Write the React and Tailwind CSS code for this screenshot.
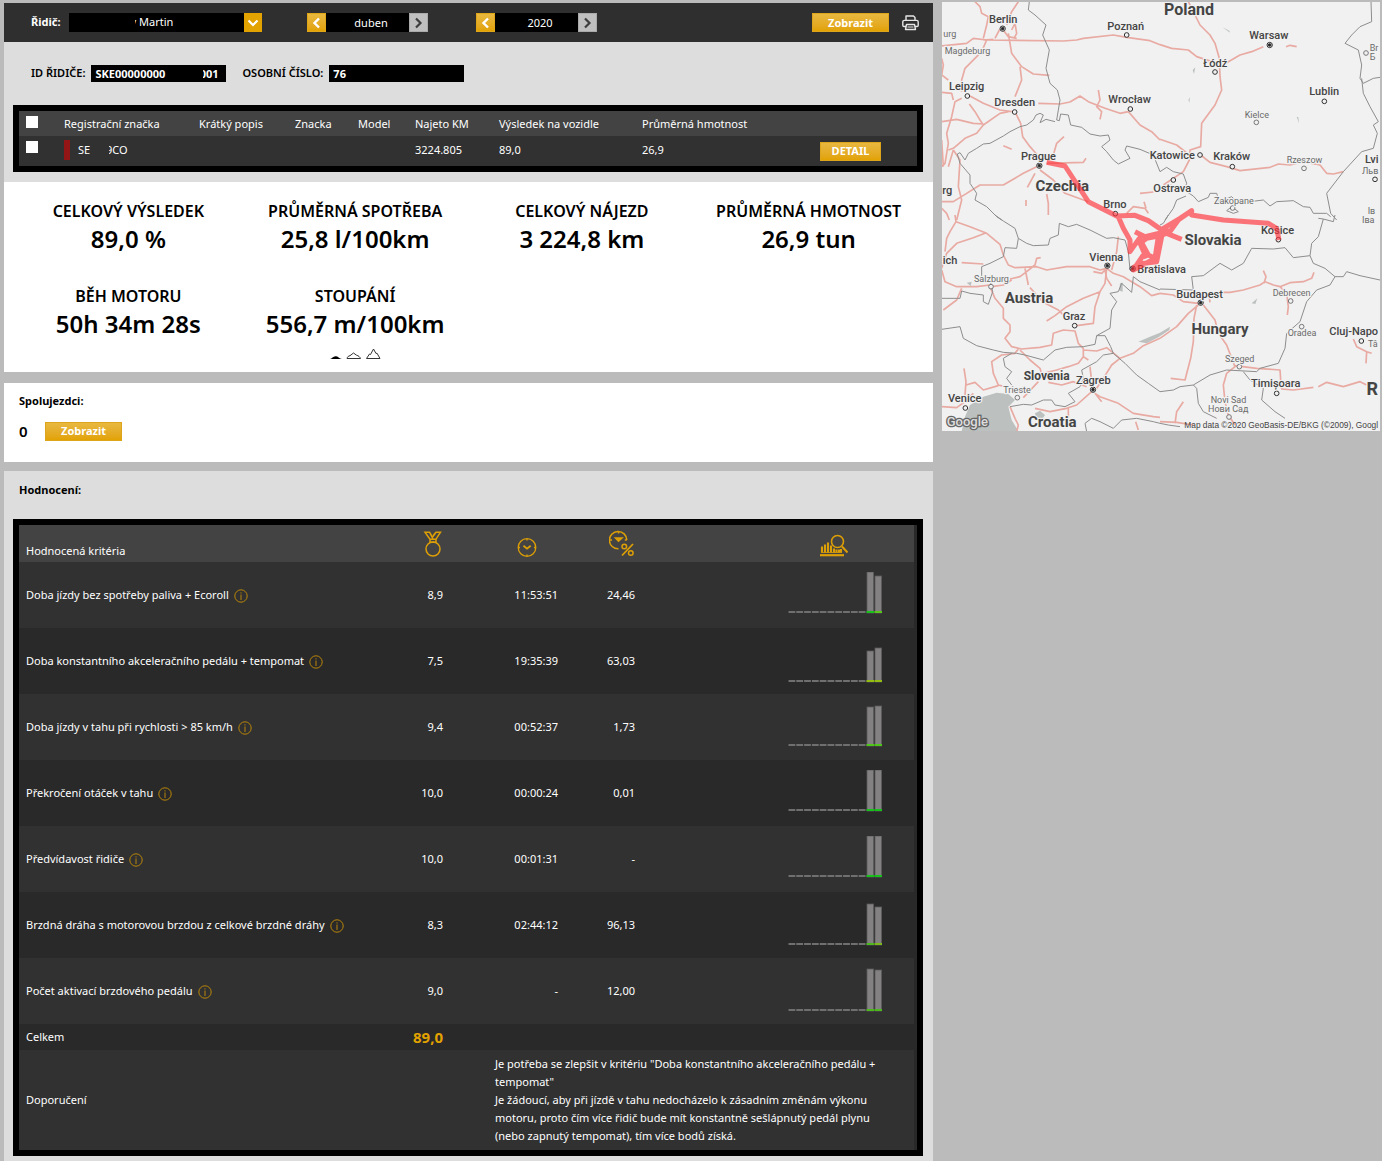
import { useState } from 'react'
import clsx from 'clsx'

const months = ['leden', 'únor', 'březen', 'duben', 'květen', 'červen', 'červenec', 'srpen', 'září', 'říjen', 'listopad', 'prosinec']

const stats = [
  { label: 'CELKOVÝ VÝSLEDEK', value: '89,0 %' },
  { label: 'PRŮMĚRNÁ SPOTŘEBA', value: '25,8 l/100km' },
  { label: 'CELKOVÝ NÁJEZD', value: '3 224,8 km' },
  { label: 'PRŮMĚRNÁ HMOTNOST', value: '26,9 tun' },
  { label: 'BĚH MOTORU', value: '50h 34m 28s' },
  { label: 'STOUPÁNÍ', value: '556,7 m/100km', hills: true }
]

// base = y of the chart baseline, bars = [height, colour of the foot]
const criteria = [
  { name: 'Doba jízdy bez spotřeby paliva + Ecoroll', score: '8,9', time: '11:53:51', pct: '24,46', base: 41, bars: [[41, '#16c21a'], [37, '#58c71a']] },
  { name: 'Doba konstantního akceleračního pedálu + tempomat', score: '7,5', time: '19:35:39', pct: '63,03', base: 44, bars: [[31, '#93bd12'], [34, '#93bd12']] },
  { name: 'Doba jízdy v tahu při rychlosti > 85 km/h', score: '9,4', time: '00:52:37', pct: '1,73', base: 42, bars: [[39, '#4fc51a'], [40, '#4fc51a']] },
  { name: 'Překročení otáček v tahu', score: '10,0', time: '00:00:24', pct: '0,01', base: 41, bars: [[41, '#16c21a'], [41, '#16c21a']] },
  { name: 'Předvídavost řidiče', score: '10,0', time: '00:01:31', pct: '-', base: 41, bars: [[41, '#16c21a'], [41, '#16c21a']] },
  { name: 'Brzdná dráha s motorovou brzdou z celkové brzdné dráhy', score: '8,3', time: '02:44:12', pct: '96,13', base: 43, bars: [[41, '#4cb81c'], [38, '#7ab81c']] },
  { name: 'Počet aktivací brzdového pedálu', score: '9,0', time: '-', pct: '12,00', base: 43, bars: [[42, '#4cb81c'], [41, '#4cb81c']] }
]

const GoldButton = ({ children, className }) => (
  <button
    type="button"
    className={clsx(
      'h-[19px] border border-[#dca51c] bg-linear-to-b from-[#e8b83e] to-[#e2a200] text-[11px] leading-4 font-bold text-white',
      className
    )}
  >
    {children}
  </button>
)

const Stepper = ({ label, value, onPrev, onNext }) => (
  <div className="flex h-[19px]" role="group" aria-label={label}>
    <button type="button" aria-label="Předchozí" onClick={onPrev} className="flex w-[19px] items-center justify-center border border-[#e0a61a] bg-linear-to-b from-[#e8b83e] to-[#e2a200]">
      <svg width="9" height="12" viewBox="0 0 9 12" fill="none" stroke="#fff" strokeWidth="2.4"><path d="M7 1.500 2.500 6 7 10.500" /></svg>
    </button>
    <span className="w-[83px] bg-black pl-2 text-center text-[11px] leading-[19px] text-white">{value}</span>
    <button type="button" aria-label="Další" onClick={onNext} className="flex w-[19px] items-center justify-center border border-[#aaa] bg-[#bfbfbf]">
      <svg width="9" height="12" viewBox="0 0 9 12" fill="none" stroke="#3d3d3d" strokeWidth="2.200"><path d="M2 1.500 6.500 6 2 10.500" /></svg>
    </button>
  </div>
)

const PrinterIcon = () => (
  <svg width="17" height="16" viewBox="0 0 17 16" fill="none" stroke="#e6e6e6" strokeWidth="1.400" strokeLinejoin="round">
    <path d="M4 5V1h7.500L13 2.500V5" />
    <path d="M4 11.500H2A1.200 1.200 0 0 1 .8 10.300V7A1.600 1.600 0 0 1 2.400 5.400h12.200A1.600 1.600 0 0 1 16.200 7v3.300a1.200 1.200 0 0 1-1.200 1.200h-2" />
    <path d="M4.500 9.500h8l1 5h-10z" />
    <path d="M5.500 12h6" strokeWidth="1" />
  </svg>
)

const HillsIcon = () => (
  <svg className="mx-auto mt-2" width="52" height="12" viewBox="0 0 52 12" fill="none" stroke="#333" strokeWidth="1">
    <path d="M1 11c2-.5 3-2.500 5.500-2.800C9 8 10 10.500 13 11z" fill="#000" stroke="none" />
    <path d="M18 10.500c.5-2 1.500-2.500 3-2.800L24.500 5l3 2.200c2 .5 3.500 1.800 4 3.300z" />
    <path d="M37.500 10.500 40.500 6l1 .5L44.500 1 47 5.500l1-.3 3 5.300z" />
  </svg>
)

const MedalIcon = () => (
  <svg className="ml-auto" width="22" height="26" viewBox="0 0 22 26" fill="none" stroke="#dd9f06" strokeWidth="1.500">
    <circle cx="12" cy="18" r="7" />
    <path d="M4 1.200h4.500l3 5 3.500-5h4.500L15 8.200v3H9v-3zM9 8.200h6M8.500 1.200 12 8M15 1.200 12.500 4" />
  </svg>
)

const ClockIcon = () => (
  <svg className="mx-auto" width="20" height="20" viewBox="0 0 20 20" fill="none" stroke="#dd9f06" strokeWidth="1.300">
    <circle cx="10" cy="9.500" r="8.800" />
    <path d="m6.500 7.800 3.500 2.800 3.700-2.800" strokeWidth="1.800" />
    <path d="M10 1v1.600M10 16.500v1.600M1.500 9.500H3M17 9.500h1.500" />
  </svg>
)

const ClockPercentIcon = () => (
  <svg className="ml-auto" width="26" height="27" viewBox="0 0 26 27" fill="none" stroke="#dd9f06" strokeWidth="1.500">
    <path d="M9.500 18.800A8.700 8.700 0 1 1 17.800 10" />
    <path d="m6.500 8 3 3.200L13 8z" fill="#dd9f06" />
    <path d="M9.500 1.500v2M1 10h2M15.800 10h2" />
    <circle cx="15.300" cy="16.500" r="2.300" />
    <circle cx="21.800" cy="23" r="2.300" />
    <path d="M24 14 13 25.500" strokeWidth="1.800" />
  </svg>
)

const AnalysisIcon = () => (
  <svg width="28" height="23" viewBox="0 0 28 23" fill="none" stroke="#dd9f06">
    <circle cx="17.500" cy="7.500" r="6" strokeWidth="1.600" />
    <path d="m22 12.500 5.500 6" strokeWidth="2" />
    <path d="M2 18.500v-6M5 18.500v-8M8 18.500V8.500M11 18.500v-7M14 18.500v-4M16.500 18.500v-3M19 18.500v-3M21 18.500v-3.500" strokeWidth="2.100" />
    <path d="M0 21.200h24" strokeWidth="2.200" />
    <path d="M1 18.500h21" strokeWidth="0.800" />
  </svg>
)

const InfoIcon = () => (
  <svg className="ml-[5px] inline-block align-[-4px]" width="14" height="14" viewBox="0 0 14 14" fill="none" stroke="#b9860a" strokeWidth="1">
    <circle cx="7" cy="7" r="6.200" />
    <path d="M7 5.500v5.500M7 3.300v1.200" />
  </svg>
)

const TrendChart = ({ base, bars }) => (
  <svg className="ml-auto block" width="94" height="46" viewBox="0 0 94 46">
    {Array.from({ length: 10 }, (_, i) => (
      <rect key={i} x={0.5 + i * 7.8} y={base - 2} width="6.800" height="2" fill="#6f6f6f" />
    ))}
    {bars.map(([height, color], i) => (
      <g key={i}>
        <rect x={79 + i * 8} y={base - height} width="6.600" height={height} fill="#838181" stroke="#5c5b5b" strokeWidth="0.800" />
        <rect x={78.5 + i * 8} y={base - 2} width="7.500" height="2" fill={color} />
      </g>
    ))}
  </svg>
)

// Three map units make one pixel; every tile keeps its own origin.
const tiles = [
  {
    shift: 'translate(0 0)',
    roads: [
      'M105 5 120 20 125 40 145 50 140 75 130 115M235 5 215 35 200 75M130 120 160 118M165 115 178 90 188 88 205 110 230 115M215 90 225 70 230 100 222 115M0 138 80 130 100 115 140 120 370 123 410 120 430 115 520 105 560 112 630 122 660 134',
      'M205 100 215 160 245 200 280 222 328 226M240 200 245 240 225 290M140 120 125 155 75 205 65 240 65 275M5 175 10 195 5 225 25 240M5 277 35 280 40 300M65 295 45 305 35 350 20 400 25 430 15 490 5 500',
      'M90 288 130 310 180 330 215 335M205 335 180 340 130 375 110 400 75 415 40 445 25 450M5 365 50 358 100 370 130 372M88 312 105 335 120 360 130 375M295 310 360 312 390 306 420 288 445 305 495 325 540 340 565 335M475 270 480 300 470 320 485 335 480 358',
      'M565 335 600 375 635 395 660 420M225 335 242 370 248 410 270 440 292 465M340 465 350 430 372 410M190 437 215 448M320 490 430 487 438 475M5 605 40 605 80 580 120 555 190 555 250 520 290 500M300 510 340 540 375 580 445 605M285 520 262 562M320 582 325 610 325 645M258 600 258 618M40 450 60 480 55 560 65 600 50 660M5 625 20 640 28 660M40 450 25 500M5 420 10 500M560 640 580 620 615 625 625 640M612 605 618 625M600 580 640 576'
    ],
    borders: [
      'M268 5 265 30 285 45 318 75 308 105 328 150 318 205 330 250 352 270 360 300 350 360 358 362 362 342 385 345 392 375 425 382 450 402 480 408 505 405 510 420 485 440 500 455 520 480 535 492 570 475 555 450 560 438 600 448 640 465 660 515',
      'M345 365 318 358 300 368 310 345 300 340 288 345 280 360 260 375 240 380 210 395 190 408 150 430 130 432 110 445 85 460 75 480 60 458 52 462 60 490 90 525 90 550 110 580 105 600 140 620 170 650 185 660'
    ]
  },
  {
    shift: 'translate(660 0)',
    roads: [
      'M85 5 105 45 120 75 150 105 165 130 178 175 180 230 185 270 165 315 125 370 122 440 90 450 88 480 70 515 10 555M0 134 35 145 85 150 110 170 165 188 200 188 240 165 275 155 310 140M378 140 390 136 410 140M0 418 50 435 88 465M122 465 150 487 200 500 240 512 330 502 355 492 390 495 430 485 480 495 500 520 520 522 550 515M0 570 35 555'
    ],
    borders: [
      'M633 5 635 65 600 80 575 105 555 130 595 150 605 195 600 235 610 250 640 235 660 232M605 235 610 280 630 320 655 365 640 375 652 400 640 445 605 455 550 515 500 580 512 640 530 660',
      'M0 515 20 502 40 515 70 522 80 550 72 570 100 588 115 605 145 592 150 580 170 580 178 605 215 590 225 600 270 605 310 600 330 618 350 605 400 602 430 620 450 622 460 640 500 640 512 650M200 632 215 620 235 635 220 640zM78 588 50 600 40 625 15 660'
    ]
  },
  {
    shift: 'translate(0 645)',
    roads: [
      'M45 0 48 20 90 35 140 55 180 88 190 120 205 150 225 158 290 155 320 165 380 155 450 155 480 165 500 160M135 55 100 68 50 85 20 115 5 160M15 110 20 70 30 50 48 20M5 165 15 200 50 215 110 215 150 210M65 143 130 147M210 192 240 185 260 170 285 150M255 160 265 210M285 150 290 130 302 128M155 215 190 210 215 195',
      'M65 220 50 255 10 285M150 215 165 250 190 280 190 310 210 330 210 350 195 370 215 395 245 402 300 397 335 390 340 355 370 345 405 348 415 385 430 400 430 425 415 445 385 455 350 465 310 475M270 218 290 240 310 262 355 285 375 305 405 312M320 318 345 302 380 275 430 250 480 230 495 205 500 160M480 230 465 275 460 325 410 332M430 405 470 408 500 398 540 430M430 425 445 435',
      'M460 170 485 175 500 160 520 175 550 185 600 215 635 242 660 235M495 165 500 190 515 213M515 165 530 110 535 65M240 405 270 435 300 460 310 495M235 402 225 415 185 420 155 440 160 475 175 510 195 515M72 460 78 500 75 540M78 510 105 502 130 525 175 512M5 575 50 578 75 560 100 535M250 548 295 500',
      'M660 370 610 392 580 415 540 430 515 450 490 490 470 520M450 455 455 500M325 502 365 510 400 500 440 515M465 535 480 545 535 565 580 595 640 605 660 607M455 530 410 570 380 580 330 590 285 580M210 575 225 610 235 630 230 650M385 575 385 610M587 620 595 645M465 535 485 560'
    ],
    borders: [
      'M165 0 190 18 225 40 235 70 260 85 280 92 325 90 330 70 355 60 358 25 385 35 410 28 450 45 500 70 520 68 555 75M555 75 565 110 570 165M235 70 230 100 195 98 190 125 150 145 125 155 125 185 150 195 158 230 145 268 130 260 130 240 90 235 65 228 60 250 5 250',
      'M5 343 60 335 70 370 110 392 160 405 190 412 230 415 255 420 310 435 345 405 380 397 430 395 465 388 470 362 510 340 515 285 530 260 510 235 535 230 545 205 575 232 580 185 600 200 660 225M470 362 495 362 512 395 520 415 555 445 590 480 625 505 660 530',
      'M215 415 190 430 195 455 215 470 200 490 215 510M210 575 250 568 275 570 310 555 335 555 345 570 375 575 405 560 385 535 420 515 430 490 425 465 470 440 490 420 520 415M440 650 435 625 455 610 480 620 520 640 545 615 590 610 640 620 660 625'
    ]
  },
  {
    shift: 'translate(660 645)',
    roads: [
      'M0 235 40 240 70 260 115 265M0 370 50 335 85 295 115 270M110 270 102 310 100 380 92 430 75 495 32 490M130 270 165 315 175 355 200 390 215 430 225 455 200 475 190 510 195 560 205 600 225 630M180 232 210 232 250 225 300 210 315 200 340 210 360 215 390 203 430 200 455 190 462 172M310 167 318 185 312 205M360 215 380 235 385 275 382 300M150 262 148 245M225 452 290 460 360 465 362 495 365 522 400 525 460 517M475 515 500 502 550 515 600 500 620 510M580 372 590 395 620 410 618 445M620 410 635 415M0 620 50 622 100 630M70 560 50 590 45 625'
    ],
    borders: [
      'M0 222 100 225 95 185 130 182 180 145 215 165 250 145 275 100 340 102 375 98 400 128 450 122 460 145 495 160 525 185 510 210 470 225 440 260 420 320 380 355 375 400 355 445 300 460 290 470 200 465 150 480 100 510 60 515 40 525 0 530',
      'M450 122 455 85 475 65 490 12 475 10M490 12 520 20 525 0M525 185 550 185 560 170 600 182 660 195M250 470 270 495 310 520 305 555 345 590 375 610M100 510 110 520 115 565 130 590 170 610M0 625 25 630 60 635M25 0 10 25 0 30'
    ]
  }
]

const route = [
  'M-100 -83 -45 -72 25 35 70 58 110 78 165 76 205 92 260 130 305 148',
  'M115 80 130 115 150 150 150 185 178 145 205 195 225 205 235 140 270 125 295 90 335 62 335 75 430 90 565 100 590 115 597 150',
  'M158 235 175 222 230 215 235 190',
  'M165 125 195 140 270 122M180 160 200 145 250 135M190 195 160 240 225 205M178 155 200 205',
  'M335 62 300 85 250 115 232 205'
]

// text, x, y (baseline start) and the town's marker
const places = [
  { t: 'Berlin', x: 147, y: 69, c: [188, 86], capital: true },
  { t: 'Poznań', x: 502, y: 90, c: [560, 105] },
  { t: 'urg', x: 10, y: 112, minor: true },
  { t: 'Magdeburg', x: 14, y: 162, minor: true },
  { t: 'Leipzig', x: 27, y: 270, c: [82, 288] },
  { t: 'Dresden', x: 163, y: 319, c: [224, 336] },
  { t: 'Wrocław', x: 505, y: 309, c: [571, 327] },
  { t: 'Prague', x: 243, y: 480, c: [298, 497], capital: true },
  { t: 'Brno', x: 490, y: 625, c: [526, 641] },
  { t: 'rg', x: 7, y: 582 },
  { t: 'Warsaw', x: 928, y: 117, c: [989, 135], capital: true },
  { t: 'Łódź', x: 790, y: 201, c: [825, 216] },
  { t: 'Lublin', x: 1108, y: 286, c: [1153, 304] },
  { t: 'Kielce', x: 914, y: 353, c: [949, 367], minor: true },
  { t: 'Katowice', x: 629, y: 478, c: [780, 465] },
  { t: 'Kraków', x: 820, y: 481, c: [877, 500] },
  { t: 'Rzeszow', x: 1040, y: 490, c: [1092, 505], minor: true },
  { t: 'Ostrava', x: 640, y: 577, c: [700, 540] },
  { t: 'Zakopane', x: 822, y: 613, c: [878, 624], minor: true },
  { t: 'Br', x: 1289, y: 154, c: [1278, 159], minor: true },
  { t: 'Б', x: 1289, y: 180, minor: true },
  { t: 'Lvi', x: 1275, y: 489, c: [1305, 538] },
  { t: 'Льв', x: 1266, y: 521, minor: true },
  { t: 'Ів', x: 1283, y: 642, minor: true },
  { t: 'Іва', x: 1266, y: 669, minor: true },
  { t: 'ich', x: 8, y: 793 },
  { t: 'Vienna', x: 448, y: 782, c: [502, 797], capital: true },
  { t: 'Bratislava', x: 592, y: 818, c: [578, 806], capital: true },
  { t: 'Salzburg', x: 102, y: 846, c: [153, 860], minor: true },
  { t: 'Graz', x: 368, y: 960, c: [404, 977] },
  { t: 'Zagreb', x: 408, y: 1152, c: [459, 1169], capital: true },
  { t: 'Trieste', x: 190, y: 1179, c: [232, 1193], minor: true },
  { t: 'Venice', x: 24, y: 1207, c: [76, 1224] },
  { t: 'Košice', x: 963, y: 701, c: [1015, 719] },
  { t: 'Budapest', x: 709, y: 893, c: [782, 908], capital: true },
  { t: 'Debrecen', x: 998, y: 889, c: [1052, 903], minor: true },
  { t: 'Oradea', x: 1043, y: 1008, c: [1085, 980], minor: true },
  { t: 'Cluj-Napo', x: 1168, y: 1006, c: [1264, 1023] },
  { t: 'Tâ', x: 1284, y: 1042, minor: true },
  { t: 'Szeged', x: 855, y: 1086, c: [898, 1100], minor: true },
  { t: 'Timișoara', x: 933, y: 1162, c: [1010, 1180] },
  { t: 'Novi Sad', x: 812, y: 1208, minor: true },
  { t: 'Нови Сад', x: 804, y: 1236, c: [867, 1251], minor: true }
]

const countries = [
  { t: 'Poland', x: 747, y: 45, size: 48 },
  { t: 'Czechia', x: 367, y: 573, size: 45 },
  { t: 'Slovakia', x: 819, y: 736, size: 45 },
  { t: 'Austria', x: 267, y: 909, size: 45 },
  { t: 'Hungary', x: 840, y: 1002, size: 45 },
  { t: 'Slovenia', x: 320, y: 1141, size: 36 },
  { t: 'Croatia', x: 337, y: 1282, size: 45 },
  { t: 'R', x: 1297, y: 1186, size: 54 }
]

const RouteMap = () => (
  <svg className="block h-auto w-full bg-[#f1f1f1]" viewBox="6 6 1314 1287" role="img" aria-label="Mapa jízd" fontFamily="Roboto, 'Open Sans', sans-serif">
    <g fill="#bcc1c0">
      <path d="M65 1293 75 1250 90 1215 130 1190 170 1178 205 1182 225 1200 205 1220 215 1260 235 1293z" />
      <path d="M285 1240 300 1232 315 1245 305 1260 290 1262zM595 1025 630 1010 660 998 690 980 688 990 655 1012 620 1030zM540 850 548 848 548 875 538 872zM80 848 95 845 92 858z" />
      <path d="M848 82 870 98 868 92zM758 210 766 202 762 222zM745 300 750 292 748 308zM1070 350 1075 352 1077 370zM935 910 952 895 946 912z" />
    </g>
    {tiles.map((tile) => (
      <g key={tile.shift} transform={tile.shift} fill="none" strokeLinejoin="round">
        {tile.roads.map((d) => <path key={d} d={d} stroke="#e8aaa2" strokeWidth="5" />)}
        {tile.borders.map((d) => <path key={d} d={d} stroke="#8d8d8d" strokeWidth="3" />)}
      </g>
    ))}
    {places.filter((p) => p.c).map((p) => (
      <g key={p.t} fill="#f1f1f1" stroke={p.minor ? '#777' : '#333'} strokeWidth="3">
        <circle cx={p.c[0]} cy={p.c[1]} r={p.capital ? 8 : 7} />
        {p.capital && <circle cx={p.c[0]} cy={p.c[1]} r="4" fill="#222" />}
      </g>
    ))}
    <g stroke="#f1f1f1" strokeWidth="7" strokeLinejoin="round" paintOrder="stroke">
      {places.map((p) => (
        <text key={p.t} x={p.x} y={p.y} fontSize={p.minor ? 27 : 33} fontWeight={p.minor ? 400 : 500} fill={p.minor ? '#6b6b6b' : '#444'}>{p.t}</text>
      ))}
      {countries.map((c) => (
        <text key={c.t} x={c.x} y={c.y} textAnchor="middle" fontSize={c.size} fontWeight="700" fill="#444">{c.t}</text>
      ))}
    </g>
    <g transform="translate(420 570)" fill="none" stroke="#ff3038" strokeOpacity="0.650" strokeWidth="15" strokeLinejoin="round">
      <path d={route.join('')} />
    </g>
    <text x="20" y="1278" fontSize="39" fontWeight="500" fill="#ddd" stroke="#666" strokeWidth="8" paintOrder="stroke">Google</text>
    <text x="733" y="1284" fontSize="25" fill="#444" fontFamily="'Liberation Sans', sans-serif">Map data ©2020 GeoBasis-DE/BKG (©2009), Googl</text>
  </svg>
)

const Field = ({ id, label, value, children }) => (
  <div className="flex items-center gap-1.5">
    <label htmlFor={id} className="text-[11px] font-semibold text-black">{label}</label>
    <div className="relative">
      <input id={id} readOnly value={value} className="block h-[17px] w-[135px] bg-black px-1 text-[11px] leading-4 font-bold text-white outline-none" />
      {children}
    </div>
  </div>
)

const App = () => {
  const [month, setMonth] = useState(3)
  const [year, setYear] = useState(2020)

  return (
    <div className="grid min-h-screen grid-cols-[929fr_438fr] items-start gap-[9px] bg-[#bbb] pr-0.5 pl-1 font-['Noto_Sans','Open_Sans',sans-serif] text-[11px] text-white">
      <main className="pt-[3px]">
        <header className="flex h-[39px] items-center bg-[#2f2f2f] pr-3.5 pl-[27px]">
          <label htmlFor="driver" className="font-bold">Řidič:</label>
          <div className="relative ml-2">
            <select id="driver" className="block h-[19px] w-[193px] appearance-none bg-black pl-[62px] text-[11px] text-white outline-none">
              <option>y Martin</option>
            </select>
            <span className="absolute top-0 left-10 h-4 w-[26px] bg-black" />
            <span className="pointer-events-none absolute top-0 right-0 flex h-[19px] w-[18px] items-center justify-center bg-[#e2a200]">
              <svg width="12" height="8" viewBox="0 0 12 8" fill="none" stroke="#fff" strokeWidth="2.200"><path d="m1.500 1.500 4.500 4.500 4.500-4.500" /></svg>
            </span>
          </div>
          <div className="ml-[45px] flex gap-12">
            <Stepper label="Měsíc" value={months[month]} onPrev={() => setMonth((month + 11) % 12)} onNext={() => setMonth((month + 1) % 12)} />
            <Stepper label="Rok" value={year} onPrev={() => setYear(year - 1)} onNext={() => setYear(year + 1)} />
          </div>
          <GoldButton className="mr-[13px] ml-auto w-[77px]">Zobrazit</GoldButton>
          <button type="button" aria-label="Tisk"><PrinterIcon /></button>
        </header>

        <section className="bg-[#ddd] pt-[23px] pr-2.5 pb-2.5 pl-[9px]">
          <div className="flex gap-4 pl-[18px]">
            <Field id="driver-id" label="ID ŘIDIČE:" value={'SKE00000000' + '\u00a0'.repeat(12) + '001'}>
              <span className="absolute top-0 left-[76px] h-full w-9 bg-black" />
            </Field>
            <Field id="personal-number" label="OSOBNÍ ČÍSLO:" value="76" />
          </div>

          <div className="mt-[23px] border-6 border-black bg-[#292929]">
            <table className="w-full table-fixed border-collapse text-left">
              <colgroup>
                <col className="w-[45px]" />
                <col className="w-[135px]" />
                <col className="w-24" />
                <col className="w-[63px]" />
                <col className="w-[57px]" />
                <col className="w-[84px]" />
                <col className="w-[143px]" />
                <col className="w-[178px]" />
                <col />
              </colgroup>
              <thead className="bg-[#434343]">
                <tr className="h-[25px]">
                  <th className="pb-1 pl-[7px]"><input type="checkbox" aria-label="Vybrat vše" className="block size-3 appearance-none bg-white" /></th>
                  {['Registrační značka', 'Krátký popis', 'Znacka', 'Model', 'Najeto KM', 'Výsledek na vozidle', 'Průměrná hmotnost', ''].map((h) => (
                    <th key={h} className="pt-0.5 font-normal">{h}</th>
                  ))}
                </tr>
              </thead>
              <tbody className="bg-[#313131]">
                <tr className="h-[30px]">
                  <td className="pb-2 pl-[7px]"><input type="checkbox" aria-label="Vybrat vozidlo" className="block size-3 appearance-none bg-white" /></td>
                  <td className="pb-0.5">
                    <div className="flex h-5 items-center">
                      <span className="mr-2 h-5 w-1.5 bg-[#931515]" />
                      <span className="w-7">SE</span>
                      <span className="relative">
                        9CO
                        <span className="absolute top-0 left-0 h-full w-[3px] bg-[#313131]" />
                      </span>
                    </div>
                  </td>
                  <td />
                  <td />
                  <td />
                  <td className="pb-0.5">3224.805</td>
                  <td className="pb-0.5">89,0</td>
                  <td className="pb-0.5">26,9</td>
                  <td><GoldButton className="block w-[61px]">DETAIL</GoldButton></td>
                </tr>
              </tbody>
            </table>
          </div>
        </section>

        <section className="grid h-[190px] grid-cols-4 content-start gap-y-[30px] bg-white px-[11px] pt-[18px] text-black">
          {stats.map((s) => (
            <div key={s.label} className="text-center font-semibold">
              <h2 className="text-base leading-[22px]">{s.label}</h2>
              <p className="mt-px text-2xl leading-8">{s.value}</p>
              {s.hills && <HillsIcon />}
            </div>
          ))}
        </section>

        <section className="mt-[11px] h-[79px] bg-white px-[15px] pt-2.5 text-black">
          <h3 className="leading-4 font-bold">Spolujezdci:</h3>
          <div className="mt-3 flex items-center">
            <span className="w-[26px] text-[15px] leading-5 font-semibold">0</span>
            <GoldButton className="w-[77px]">Zobrazit</GoldButton>
          </div>
        </section>

        <section className="mt-[9px] bg-[#ddd] pt-[11px] pr-2.5 pb-[5px] pl-[9px]">
          <h3 className="pl-1.5 leading-4 font-bold text-black">Hodnocení:</h3>
          <div className="mt-[21px] border-6 border-black bg-[#292929] pr-[3px]">
            <table className="w-full table-fixed border-collapse">
              <colgroup>
                <col className="w-[380px]" />
                <col className="w-[92px]" />
                <col className="w-[71px]" />
                <col className="w-[77px]" />
                <col />
              </colgroup>
              <thead>
                <tr className="h-[37px] bg-[#434343]">
                  <th className="pt-4 pl-[7px] text-left font-normal">Hodnocená kritéria</th>
                  <th className="pr-12" aria-label="Hodnocení"><MedalIcon /></th>
                  <th className="pt-2" aria-label="Čas"><ClockIcon /></th>
                  <th className="pr-1" aria-label="Procenta"><ClockPercentIcon /></th>
                  <th className="pt-1 pr-8" aria-label="Vývoj"><div className="ml-auto flex w-[94px] justify-center pr-0.5"><AnalysisIcon /></div></th>
                </tr>
              </thead>
              <tbody>
                {criteria.map((c) => (
                  <tr key={c.name} className="h-[66px] text-right odd:bg-[#313131]">
                    <td className="pl-[7px] text-left">{c.name}<InfoIcon /></td>
                    <td className="pr-12">{c.score}</td>
                    <td className="pr-1">{c.time}</td>
                    <td className="pr-1">{c.pct}</td>
                    <td className="pr-8"><TrendChart base={c.base} bars={c.bars} /></td>
                  </tr>
                ))}
                <tr className="h-[26px]">
                  <td className="pl-[7px]">Celkem</td>
                  <td className="pr-12 text-right text-[15px] leading-5 font-bold text-[#e2a200]">89,0</td>
                  <td colSpan="3" />
                </tr>
                <tr className="h-[100px] bg-[#313131]">
                  <td className="pl-[7px]">Doporučení</td>
                  <td />
                  <td colSpan="3" className="pr-5 pl-1 leading-[18px]">
                    <p>Je potřeba se zlepšit v kritériu "Doba konstantního akceleračního pedálu + tempomat"</p>
                    <p>Je žádoucí, aby při jízdě v tahu nedocházelo k zásadním změnám výkonu motoru, proto čím více řidič bude mít konstantně sešlápnutý pedál plynu (nebo zapnutý tempomat), tím více bodů získá.</p>
                  </td>
                </tr>
              </tbody>
            </table>
          </div>
        </section>
      </main>

      <aside className="mt-0.5">
        <RouteMap />
      </aside>
    </div>
  )
}

export default App
